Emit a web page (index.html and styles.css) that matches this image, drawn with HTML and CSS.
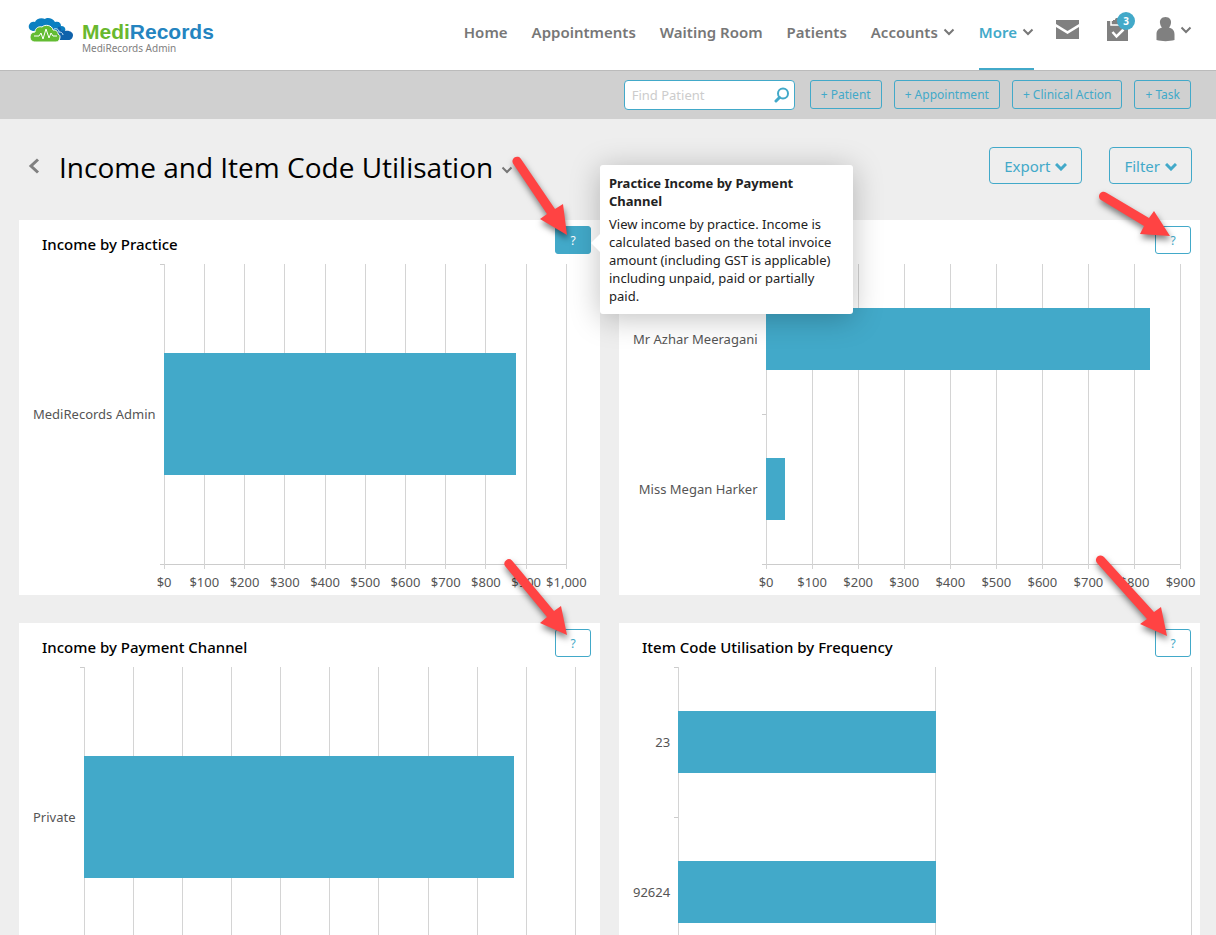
FILE: index.html
```
<!DOCTYPE html>
<html lang="en">

<head>
  <meta charset="UTF-8">
  <title>Income and Item Code Utilisation - MediRecords</title>
  <link rel="stylesheet" href="styles.css">
</head>

<body>
  <header class="site-header">
    <a class="logo" href="#">
      <svg class="logo-cloud" width="46" height="26" viewBox="0 0 46 26" aria-hidden="true">
        <path d="M6 13C2 13 0 10 1 7c1-3 4-4 6-3 1-3 6-5 10-3 2-2 8-1 10 3 4-1 6 1 6 4 4 0 5 3 4 5 4 0 7 3 7 5 0 3-2 4-5 4H24z" fill="#0b7fc1"/>
        <path d="M30 9c2-1 4 1 3 4 2-1 3-1 4 0 5-1 8 2 8 4 0 3-2 5-5 5H28z" fill="#0f62ab"/>
        <path d="M8 24c-4 0-6-2-6-5 0-3 2-5 5-5 0-4 4-6 7-5 3-3 10-2 11 3 4 0 5 2 5 4 2 1 2 2 2 3 0 3-2 5-4 5z" fill="#63bc32" stroke="#fff" stroke-width="1"/>
        <path d="M26 11c2-1 5 0 5 3 2 0 4 1 4 3" fill="none" stroke="#cfe6f5" stroke-width="1"/>
        <path d="M6 18h5l2-3 2 6 3-10 3 9 2-5 2 3h4" fill="none" stroke="#fff" stroke-width="1"/>
      </svg>
      <span class="logo-text">
        <span class="logo-name"><span class="logo-medi">Medi</span>Records</span>
        <span class="logo-practice">MediRecords Admin</span>
      </span>
    </a>

    <nav class="main-nav">
      <a href="#">Home</a>
      <a href="#">Appointments</a>
      <a href="#">Waiting Room</a>
      <a href="#">Patients</a>
      <a href="#">Accounts
        <svg width="12" height="8" viewBox="0 0 12 8"><path d="M1.500 1.500L6 6l4.500-4.500"/></svg>
      </a>
      <a class="active" href="#">More
        <svg width="12" height="8" viewBox="0 0 12 8"><path d="M1.500 1.500L6 6l4.500-4.500"/></svg>
      </a>
    </nav>

    <div class="header-icons">
      <button type="button" aria-label="Messages">
        <svg width="24" height="20" viewBox="0 0 24 20">
          <path d="M0 0h23v4L11.500 11 0 4z" fill="#808080"/>
          <path d="M0 7l11.500 7L23 7v12H0z" fill="#808080"/>
        </svg>
      </button>
      <button type="button" class="tasks-button" aria-label="Tasks">
        <svg width="22" height="24" viewBox="0 0 22 24">
          <path d="M0 3h21v20H0z" fill="#808080"/>
          <path d="M4 3v4h13V3" fill="none" stroke="#fff" stroke-width="1.500"/>
          <path d="M6 4V2h2c0-3 5-3 5 0h2v2z" fill="#808080"/>
          <path d="M5.500 14l4 4.500 7-7" fill="none" stroke="#fff" stroke-width="2.500"/>
        </svg>
        <span class="badge">3</span>
      </button>
      <button type="button" class="user-button" aria-label="Account">
        <svg width="20" height="26" viewBox="0 0 20 26">
          <path d="M9.500 0c4 0 6 3 5.500 6-.3 2-1 3.500-2 4.500 3.500 1 5.500 3 5.500 7V23c-5 1.500-13 1.500-18 0v-5.500c0-4 2-6 5.500-7-1-1-1.700-2.500-2-4.500C3.500 3 5.500 0 9.500 0z" fill="#808080"/>
        </svg>
        <svg class="caret" width="12" height="8" viewBox="0 0 12 8"><path d="M1.500 1.500L6 6l4.500-4.500"/></svg>
      </button>
    </div>
  </header>

  <div class="quick-bar">
    <form class="patient-search">
      <input type="text" placeholder="Find Patient" aria-label="Find Patient">
      <button type="submit" aria-label="Search">
        <svg width="16" height="16" viewBox="0 0 16 16">
          <circle cx="9" cy="6.500" r="5" fill="none" stroke="#42a9c9" stroke-width="2"/>
          <path d="M5.500 10.500L2 14" stroke="#42a9c9" stroke-width="3" stroke-linecap="round"/>
        </svg>
      </button>
    </form>
    <button type="button" class="quick-button">+ Patient</button>
    <button type="button" class="quick-button">+ Appointment</button>
    <button type="button" class="quick-button">+ Clinical Action</button>
    <button type="button" class="quick-button">+ Task</button>
  </div>

  <main>
    <div class="page-heading">
      <a class="back" href="#" aria-label="Back">
        <svg width="12" height="16" viewBox="0 0 12 16"><path d="M10 1.500L3 8l7 6.500" fill="none" stroke="#808080" stroke-width="3"/></svg>
      </a>
      <h1>Income and Item Code Utilisation</h1>
      <button type="button" class="title-menu" aria-label="Change report">
        <svg width="12" height="8" viewBox="0 0 12 8"><path d="M1.500 1.500L6 6l4.500-4.500"/></svg>
      </button>
      <button type="button" class="action-button">Export
        <svg width="12" height="8" viewBox="0 0 12 8"><path d="M1 1l5 5 5-5"/></svg>
      </button>
      <button type="button" class="action-button">Filter
        <svg width="12" height="8" viewBox="0 0 12 8"><path d="M1 1l5 5 5-5"/></svg>
      </button>
    </div>

    <div class="charts">
      <section class="card">
        <div class="card-header">
          <h2>Income by Practice</h2>
          <div class="help">
            <button type="button" class="open">?</button>
            <div class="tooltip">
              <h3>Practice Income by Payment Channel</h3>
              <p>View income by practice. Income is calculated based on the total invoice amount (including GST is applicable) including unpaid, paid or partially paid.</p>
            </div>
            <svg class="arrow" width="1" height="1"><path d="M-54-71.500A4.500 4.500 0 0 1-46-76L-12-26-4-31 0 0-27-16-20-21z"/></svg>
          </div>
        </div>
        <div class="chart chart-practice">
          <div class="labels"><span>MediRecords Admin</span></div>
          <div class="plot">
            <div class="gridlines"><i></i><i></i><i></i><i></i><i></i><i></i><i></i><i></i><i></i><i></i><i></i></div>
            <div class="band"><div class="bar" style="width: 87.4%"></div></div>
          </div>
          <div class="axis">
            <span>$0</span><span>$100</span><span>$200</span><span>$300</span><span>$400</span><span>$500</span><span>$600</span><span>$700</span><span>$800</span><span>$900</span><span>$1,000</span>
          </div>
        </div>
      </section>

      <section class="card">
        <div class="card-header">
          <div class="help">
            <button type="button">?</button>
            <svg class="arrow" width="1" height="1"><path d="M-66-35A4.500 4.500 0 0 1-61-42.500L-18-17-13-24 3 1-27-1-23-9z"/></svg>
          </div>
        </div>
        <div class="chart chart-provider">
          <div class="labels"><span>Mr Azhar Meeragani</span><span>Miss Megan Harker</span></div>
          <div class="plot">
            <div class="gridlines"><i></i><i></i><i></i><i></i><i></i><i></i><i></i><i></i><i></i><i></i></div>
            <div class="band"><div class="bar" style="width: 92.6%"></div></div>
            <div class="band"><div class="bar" style="width: 4.7%"></div></div>
          </div>
          <div class="axis">
            <span>$0</span><span>$100</span><span>$200</span><span>$300</span><span>$400</span><span>$500</span><span>$600</span><span>$700</span><span>$800</span><span>$900</span>
          </div>
        </div>
      </section>

      <section class="card">
        <div class="card-header">
          <h2>Income by Payment Channel</h2>
          <div class="help">
            <button type="button">?</button>
            <svg class="arrow" width="1" height="1"><path d="M-62-72A4.500 4.500 0 0 1-55-77.500L-13-27-6-32 0-3-27-15-20-21z"/></svg>
          </div>
        </div>
        <div class="chart chart-channel">
          <div class="labels"><span>Private</span></div>
          <div class="plot">
            <div class="gridlines"><i></i><i></i><i></i><i></i><i></i><i></i><i></i><i></i><i></i><i></i><i></i></div>
            <div class="band"><div class="bar" style="width: 87.4%"></div></div>
          </div>
        </div>
      </section>

      <section class="card">
        <div class="card-header">
          <h2>Item Code Utilisation by Frequency</h2>
          <div class="help">
            <button type="button">?</button>
            <svg class="arrow" width="1" height="1"><path d="M-70-75A4.500 4.500 0 0 1-63-81L-13-26-6-31 0-2-27-14-20-19z"/></svg>
          </div>
        </div>
        <div class="chart chart-items">
          <div class="labels"><span>23</span><span>92624</span></div>
          <div class="plot">
            <div class="gridlines"><i></i><i></i><i></i></div>
            <div class="band"><div class="bar" style="width: 50.2%"></div></div>
            <div class="band"><div class="bar" style="width: 50.2%"></div></div>
          </div>
        </div>
      </section>
    </div>
  </main>
</body>

</html>
```
FILE: styles.css
```
* {
  box-sizing: border-box;
}

body {
  margin: 0;
  height: 100vh;
  overflow: hidden;
  background-color: #eee;
  color: #000;
  font-family: "Noto Sans", "Open Sans", sans-serif;
  font-size: 13px;
}

h1, h2, h3, p {
  margin: 0;
}

a {
  color: inherit;
  text-decoration: none;
}

button {
  font-family: inherit;
  cursor: pointer;
}

svg {
  flex: none;
}

/* Header */
.site-header {
  display: flex;
  height: 71px;
  padding: 0 24px 0 28px;
  background-color: #fff;
  border-bottom: 1px solid #bbb;
}

.logo {
  display: flex;
  gap: 8px;
  padding-top: 18px;
}

.logo-text {
  display: flex;
  flex-direction: column;
  padding-top: 3px;
}

.logo-name {
  color: #2484c0;
  font: bold 21px/22px "Liberation Sans", Arial, sans-serif;
}

.logo-medi {
  color: #69b82e;
}

.logo-practice {
  color: #808080;
  font-size: 10px;
  line-height: 10px;
}

.main-nav {
  display: flex;
  gap: 24px;
  margin-left: auto;
}

.main-nav a {
  display: flex;
  align-items: center;
  gap: 5px;
  height: 70px;
  padding-bottom: 4px;
  border-bottom: 2px solid transparent;
  color: #777;
  font-size: 15px;
  font-weight: 600;
}

.main-nav a.active {
  color: #42a9c9;
  border-bottom-color: #42a9c9;
}

.main-nav svg path,
.caret path,
.title-menu path {
  fill: none;
  stroke: #777;
  stroke-width: 2;
}

.header-icons {
  display: flex;
  align-items: center;
  gap: 27px;
  height: 60px;
  margin-left: 22px;
}

.header-icons button {
  position: relative;
  display: flex;
  align-items: center;
  gap: 4px;
  padding: 0;
  border: none;
  background: none;
}

.badge {
  position: absolute;
  top: -6px;
  left: 10px;
  width: 18px;
  border-radius: 9px;
  background-color: #42a9c9;
  color: #fff;
  font-size: 10px;
  font-weight: bold;
  line-height: 18px;
  text-align: center;
}

/* Quick actions */
.quick-bar {
  display: flex;
  justify-content: flex-end;
  gap: 12px;
  height: 48px;
  padding: 9px 25px 0 0;
  background-color: #d0d0d0;
}

.patient-search {
  display: flex;
  align-items: center;
  width: 171px;
  height: 30px;
  margin-right: 3px;
  padding: 0 4px 0 7px;
  border: 1px solid #42a9c9;
  border-radius: 4px;
  background-color: #fff;
}

.patient-search input {
  flex: 1;
  min-width: 0;
  padding: 0;
  border: none;
  outline: none;
  font: 13px "Noto Sans", "Open Sans", sans-serif;
}

.patient-search input::placeholder {
  color: #ccc;
}

.patient-search button {
  display: flex;
  padding: 0;
  border: none;
  background: none;
}

.quick-button {
  height: 29px;
  padding: 0 10px;
  border: 1px solid #42a9c9;
  border-radius: 3px;
  background: none;
  color: #42a9c9;
  font-size: 12px;
}

/* Page heading */
.page-heading {
  display: flex;
  align-items: center;
  height: 101px;
  padding: 0 24px 8px 28px;
}

.back {
  display: flex;
  margin-right: 19px;
}

h1 {
  padding-top: 2px;
  font-family: "Open Sans", sans-serif;
  font-size: 28px;
  font-weight: 400;
}

.title-menu {
  display: flex;
  margin: 8px auto 0 8px;
  padding: 0;
  border: none;
  background: none;
}

.action-button {
  display: flex;
  align-items: center;
  gap: 5px;
  height: 37px;
  margin-left: 27px;
  padding: 0 14px;
  border: 1px solid #42a9c9;
  border-radius: 4px;
  background: none;
  color: #42a9c9;
  font-size: 15px;
}

.action-button svg {
  margin-top: 2px;
}

.action-button path {
  fill: none;
  stroke: #42a9c9;
  stroke-width: 3;
}

/* Chart cards */
.charts {
  display: grid;
  grid-template-columns: 1fr 1fr;
  gap: 28px 19px;
  padding: 0 16px 28px 19px;
}

.card {
  min-width: 0;
  background-color: #fff;
}

.card-header {
  display: flex;
  align-items: flex-start;
  min-height: 44px;
  padding: 6px 9px 2px 23px;
}

h2 {
  font-size: 15px;
  font-weight: 500;
  line-height: 36px;
}

.help {
  position: relative;
  margin-left: auto;
}

.help button {
  display: block;
  width: 36px;
  height: 28px;
  padding: 0;
  border: 1px solid #42a9c9;
  border-radius: 3px;
  background-color: #fff;
  color: #42a9c9;
  font-size: 12px;
}

.help button.open {
  background-color: #42a9c9;
  color: #fff;
}

.arrow {
  position: absolute;
  top: 9px;
  left: 12px;
  z-index: 3;
  overflow: visible;
  fill: #ff4343;
  filter: drop-shadow(1px 4px 3px rgba(0, 0, 0, 0.5));
  pointer-events: none;
}

.tooltip {
  position: absolute;
  top: -61px;
  left: 45px;
  z-index: 2;
  width: 253px;
  padding: 9px;
  border-radius: 3px;
  background-color: #fff;
  box-shadow: 0 4px 30px rgba(0, 0, 0, 0.25);
  color: #222;
  line-height: 18px;
}

.tooltip::before {
  content: "";
  position: absolute;
  top: 69px;
  left: -9px;
  border: 9px solid transparent;
  border-left: none;
  border-right-color: #fff;
}

.tooltip h3 {
  margin-bottom: 5px;
  font-size: 13px;
}

/* Charts */
.chart {
  display: grid;
  grid-template-columns: auto 1fr;
  column-gap: 8px;
  padding: 0 33px 4px 14px;
  color: #555;
}

.chart-provider {
  padding-right: 19px;
}

.chart-channel {
  padding-right: 24px;
}

.chart-items {
  padding-right: 8px;
}

.labels {
  display: flex;
  flex-direction: column;
  padding-bottom: 1px;
  text-align: right;
}

.labels span {
  display: flex;
  flex: 1;
  align-items: center;
  justify-content: flex-end;
}

.plot {
  position: relative;
  display: flex;
  flex-direction: column;
  height: 301px;
  border-bottom: 1px solid #ccc;
}

.gridlines {
  position: absolute;
  inset: 0 0 -5px;
  display: flex;
  justify-content: space-between;
}

.gridlines i {
  width: 1px;
  background-color: #d4d4d4;
}

.band {
  position: relative;
  display: flex;
  flex: 1;
  align-items: center;
}

/* tick between categories */
.band::before {
  content: "";
  position: absolute;
  top: 0;
  left: -4px;
  width: 4px;
  border-top: 1px solid #ccc;
}

.band:last-child::after {
  content: "";
  position: absolute;
  bottom: -1px;
  left: -4px;
  width: 4px;
  border-top: 1px solid #ccc;
}

.bar {
  height: 40.8%;
  background-color: #42a9c9;
}

.axis {
  grid-column: 2;
  display: flex;
  justify-content: space-between;
  margin-top: 8px;
  line-height: 18px;
}

.axis span {
  display: flex;
  justify-content: center;
  width: 1px;
  white-space: nowrap;
}
```
